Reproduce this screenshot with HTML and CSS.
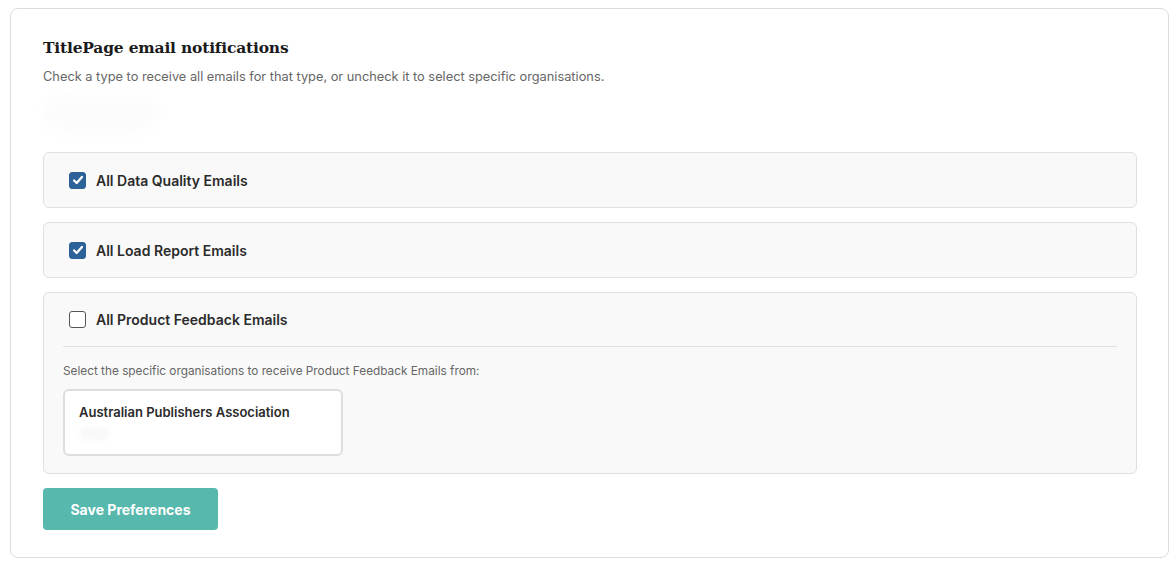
FILE: index.html
```html
<!DOCTYPE html>
<html>

<head>
    <title>Email notifications</title>
    <link rel="stylesheet" href="styles.css">
</head>

<body>
    <div class="card">
        <h2 class="card-title">TitlePage email notifications</h2>
        <p class="card-desc">Check a type to receive all emails for that type, or uncheck it to select specific organisations.</p>

        <!-- loading placeholder -->
        <div class="ghost"></div>

        <div class="types">
            <div class="type-panel">
                <label class="type-row">
                    <input type="checkbox" class="check" checked>
                    <span>All Data Quality Emails</span>
                </label>
            </div>

            <div class="type-panel">
                <label class="type-row">
                    <input type="checkbox" class="check" checked>
                    <span>All Load Report Emails</span>
                </label>
            </div>

            <div class="type-panel">
                <label class="type-row type-row-open">
                    <input type="checkbox" class="check">
                    <span>All Product Feedback Emails</span>
                </label>
                <div class="org-section">
                    <p class="org-hint">Select the specific organisations to receive Product Feedback Emails from:</p>
                    <div class="org-card">
                        <div class="org-name">Australian Publishers Association</div>
                        <div class="org-ghost"></div>
                    </div>
                </div>
            </div>
        </div>

        <button type="button" class="save-btn">Save Preferences</button>
    </div>
</body>

</html>
```

FILE: styles.css
```css
body {
    margin: 8px 6px 0 10px;
    font-family: Inter, "Open Sans", sans-serif;
    color: #333;
    background: #fff;
}

.card {
    border: 1px solid #dcdcdc;
    border-radius: 8px;
    padding: 29px 31px 28px 32px;
    height: 550px;
    box-sizing: border-box;
}

.card-title {
    font-family: "DejaVu Serif", "Liberation Serif", serif;
    font-size: 15.5px;
    font-weight: bold;
    color: #1a1a1a;
    margin: 0;
    letter-spacing: -0.2px;
}

.card-desc {
    font-size: 12.8px;
    color: #666;
    margin: 12px 0 0;
}

.ghost {
    height: 40px;
    margin: 9px 0 19px;
    width: 115px;
    background: #fcfcfc;
    border-radius: 20px;
    filter: blur(6px);
}

.types {
    display: flex;
    flex-direction: column;
    gap: 14px;
}

.type-panel {
    background: #f9f9f9;
    border: 1px solid #e0e0e0;
    border-radius: 6px;
    padding: 0 19px;
}

.type-row {
    display: flex;
    align-items: center;
    gap: 10px;
    height: 54px;
    padding-left: 6px;
    font-size: 14px;
    font-weight: 600;
    color: #2b2b2b;
    cursor: pointer;
}

.type-row-open {
    height: 53px;
}

.check {
    appearance: none;
    width: 17px;
    height: 17px;
    margin: 0;
    border: 1px solid #555;
    border-radius: 3px;
    background: #fff;
    flex-shrink: 0;
}

.check:checked {
    border-color: #2c6297;
    background: #2c6297 url("data:image/svg+xml;utf8,<svg xmlns='http://www.w3.org/2000/svg' viewBox='0 0 16 16'><path d='M3.5 8.5l3 3 6-7' fill='none' stroke='white' stroke-width='2.6' stroke-linecap='round' stroke-linejoin='round'/></svg>") center / 14px no-repeat;
}

.org-section {
    border-top: 1px solid #e0e0e0;
    padding: 17px 0 17px;
}

.org-hint {
    font-size: 11.8px;
    color: #666;
    margin: 0 0 11px;
}

.org-card {
    width: 280px;
    height: 67px;
    box-sizing: border-box;
    background: #fff;
    border: 2px solid #dedede;
    border-radius: 6px;
    padding: 13px 14px;
}

.org-name {
    font-size: 13px;
    font-weight: 600;
    color: #2b2b2b;
}

.org-ghost {
    width: 30px;
    height: 14px;
    margin-top: 7px;
    background: #f9f9f9;
    border-radius: 8px;
    filter: blur(2px);
}

.save-btn {
    margin-top: 14px;
    width: 175px;
    height: 42px;
    border: none;
    border-radius: 4px;
    background: #57b8ad;
    color: #fff;
    font-family: Inter, "Open Sans", sans-serif;
    font-size: 14px;
    font-weight: bold;
    cursor: pointer;
}
```
